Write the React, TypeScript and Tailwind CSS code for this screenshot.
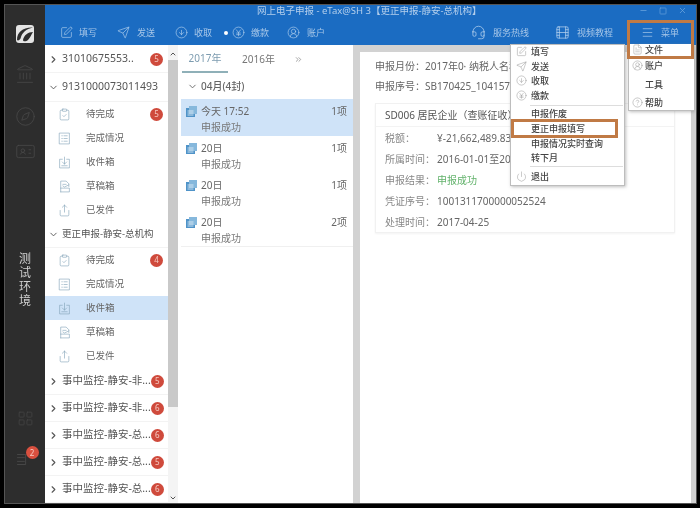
import React from "react";
import { SquarePen, Send, CircleArrowDown, CircleUserRound, Headset, Film, Menu, ChevronRight, ChevronDown, ChevronUp, ClipboardCheck, Share, Landmark, Compass, IdCard, LayoutGrid, Power, CircleHelp, FileText, Minus, Square, X, ChevronsRight } from "lucide-react";

type IconT = React.ComponentType<{ size?: number; strokeWidth?: number; className?: string }>;

const svgProps = (size: number | undefined, strokeWidth: number | undefined, className: string | undefined) => ({
  width: size, height: size, viewBox: "0 0 24 24", fill: "none", stroke: "currentColor", strokeWidth, className,
  strokeLinecap: "round" as const, strokeLinejoin: "round" as const,
});

const ListBox: IconT = ({ size, strokeWidth, className }) => (
  <svg {...svgProps(size, strokeWidth, className)}>
    <rect x="3" y="2" width="18" height="20" />
    <path d="M7 7h1M7 12h1M7 17h1M11 7h6M11 12h6M11 17h6" />
  </svg>
);
const Inbox: IconT = ({ size, strokeWidth, className }) => (
  <svg {...svgProps(size, strokeWidth, className)}>
    <path d="M8 6H3v16h18V6h-5" />
    <path d="M12 2v13M8 11l4 4 4-4M7 18h10" />
  </svg>
);
const Draft: IconT = ({ size, strokeWidth, className }) => (
  <svg {...svgProps(size, strokeWidth, className)}>
    <path d="M5 22V2h10l5 5v5M5 22h16v-7H5" />
    <path d="M9 8h6M9 11l3 2 8-4" />
  </svg>
);
const YenCircle: IconT = ({ size, strokeWidth, className }) => (
  <svg {...svgProps(size, strokeWidth, className)}>
    <circle cx="12" cy="12" r="10" />
    <path d="M8 7l4 5 4-5M12 12v6M8.5 13h7M8.5 16h7" />
  </svg>
);
const Lines: IconT = ({ size, strokeWidth, className }) => (
  <svg {...svgProps(size, strokeWidth, className)}>
    <path d="M4 4h13v16H4M4 9h11M4 15h11" />
  </svg>
);

const Badge = ({ n, className = "" }: { n: number; className?: string }) => (
  <span className={`flex h-[13px] w-[13px] shrink-0 items-center justify-center rounded-full bg-[#cf4a3c] text-[8px] leading-none text-[#f6c9c0] ${className}`}>{n}</span>
);

const GroupRow = ({ open, text, n, h = "h-[27px]", size = "text-[10.5px]" }: { open?: boolean; text: string; n?: number; h?: string; size?: string }) => (
  <div className={`flex ${h} items-center border-b border-[#f3f3f3] pl-[3px] pr-[5px] ${size} text-[#555]`}>
    {open ? <ChevronDown size={11} className="shrink-0 text-[#555]" /> : <ChevronRight size={11} strokeWidth={2.4} className="shrink-0 text-[#555]" />}
    <span className="ml-[3px] whitespace-nowrap">{text}</span>
    {n !== undefined && <Badge n={n} className="ml-auto" />}
  </div>
);

const SubRow = ({ icon: I, text, n, active }: { icon: IconT; text: string; n?: number; active?: boolean }) => (
  <div className={`flex h-[24px] items-center pl-[13px] pr-[5px] text-[9.5px] text-[#666] ${active ? "bg-[#cfe3f8]" : ""}`}>
    <I size={13} strokeWidth={1.1} className="shrink-0 text-[#7d9fb5]" />
    <span className="ml-[15px]">{text}</span>
    {n !== undefined && <Badge n={n} className="ml-auto" />}
  </div>
);

const NavItem = ({ icon: I, text, size = 13, className = "" }: { icon: IconT; text: string; size?: number; className?: string }) => (
  <div className={`flex items-center text-[9px] text-[#a6c6e8] ${className}`}>
    <I size={size} strokeWidth={1.2} className="text-[#b4d0ee]" />
    <span>{text}</span>
  </div>
);

const DayRow = ({ day, count, active, last }: { day: string; count: string; active?: boolean; last?: boolean }) => (
  <div className={`h-[37px] pl-[5px] pr-[6px] pt-[5px] text-[10px] ${active ? "bg-[#cfe3f8]" : ""} ${last ? "border-b border-[#f0f0f0]" : ""}`}>
    <div className="flex h-[14px] items-center text-[#666]">
      <svg viewBox="0 0 11 11" className="h-[11px] w-[11px]">
        <rect x="0" y="2" width="9" height="9" fill="#4f93c8" />
        <rect x="3" y="0" width="8" height="8" fill="#86b8dc" />
        <path d="M1.5 5h6M1.5 7h6M1.5 9h6" stroke="#e8f2fa" strokeWidth="0.8" />
      </svg>
      <span className="ml-[4px]">{day}</span>
      <span className="ml-auto">{count}</span>
    </div>
    <div className="ml-[15px] mt-[2px] text-[#777]">申报成功</div>
  </div>
);

const Field = ({ label, children }: { label: string; children: React.ReactNode }) => (
  <div className="flex h-[21px] items-center text-[#666]">
    <span className="w-[52px] text-[#888]">{label}</span>
    {children}
  </div>
);

const MenuItem = ({ icon: I, text, className = "", indent = "w-[20px]" }: { icon?: IconT; text: string; className?: string; indent?: string }) => (
  <div className={`flex items-center text-[9px] font-medium leading-none text-[#444] ${className}`}>
    <span className={`flex ${indent} justify-center`}>{I && <I size={11} strokeWidth={1.1} className="text-[#999]" />}</span>
    <span className="whitespace-nowrap">{text}</span>
  </div>
);

export default function App() {
  return (
    <div className="relative h-[508px] w-[700px] overflow-hidden bg-black pb-[5px] pl-[5px] pr-[4px] pt-[5px] font-['Noto_Sans','Noto_Sans_CJK_SC',sans-serif] blur-[0.5px]">
      <div className="flex h-full shadow-[0_0_0_1px_#555]">
        <aside className="flex w-[40px] shrink-0 flex-col items-center bg-[#2d2d2d]">
          <div className="mt-[20px] flex h-[18px] w-[18px] items-center justify-center rounded-[3px] bg-[#e4e4e4]">
            <svg viewBox="0 0 18 18" className="h-[18px] w-[18px]">
              <path d="M1 15C1 7 7 2 17 2.5C10 4 6 8 5 12C4.5 15 2 16 1 15Z" fill="#2d2d2d" />
              <path d="M7 15C8 10 12 7 17 7C15 10 14 13 12 15C10.5 16.5 7 17 7 15Z" fill="#2d2d2d" />
            </svg>
          </div>
          <Landmark size={20} strokeWidth={1} className="mt-[21px] text-[#474747]" />
          <Compass size={21} strokeWidth={1} className="mt-[22px] text-[#474747]" />
          <IdCard size={21} strokeWidth={1} className="mt-[14px] text-[#474747]" />
          <div className="mt-[90px] w-[12px] text-[12px] leading-[14px] text-[#cfcfcf]">测试环境</div>
          <LayoutGrid size={17} strokeWidth={1} className="mt-[102px] text-[#474747]" />
          <div className="relative mt-[25px]">
            <Lines size={15} strokeWidth={1} className="-ml-[6px] text-[#555]" />
            <Badge n={2} className="absolute -right-[9px] -top-[6px] bg-[#d9503f]" />
          </div>
        </aside>

        <div className="flex min-w-0 flex-1 flex-col">
          <header className="h-[40px] shrink-0 bg-[#1b6cc2]">
            <div className="relative h-[15px]">
              <span className="absolute left-[212px] top-0 whitespace-nowrap text-[9.5px] leading-[11px] text-[#b4cfec]">网上电子申报 - eTax@SH 3【更正申报-静安-总机构】</span>
              <div className="absolute right-[9px] top-[1px] flex items-center gap-[11px] text-[#6ba4dd]">
                <Minus size={9} /><Square size={8} /><X size={9} />
              </div>
            </div>
            <div className="flex h-[25px] items-center pl-[15px] pr-[17px]">
              <NavItem icon={SquarePen} text="填写" className="gap-[6px]" />
              <NavItem icon={Send} text="发送" className="ml-[20px] gap-[7px]" />
              <NavItem icon={CircleArrowDown} text="收取" className="ml-[20px] gap-[6px]" />
              <span className="ml-[12px] h-[4px] w-[4px] rounded-full bg-white" />
              <NavItem icon={YenCircle} text="缴款" className="ml-[4px] gap-[6px]" />
              <NavItem icon={CircleUserRound} text="账户" className="ml-[18px] gap-[7px]" />
              <NavItem icon={Headset} size={15} text="服务热线" className="ml-auto gap-[7px]" />
              <NavItem icon={Film} size={15} text="视频教程" className="ml-[26px] gap-[7px]" />
              <NavItem icon={Menu} text="菜单" className="ml-[28px] gap-[7px]" />
            </div>
          </header>

          <div className="flex min-h-0 flex-1 bg-white">
            <nav className="w-[123px] shrink-0 overflow-hidden pt-[1px]">
              <GroupRow text="31010675553.." n={5} />
              <GroupRow open text="9131000073011493" h="h-[29px]" />
              <SubRow icon={ClipboardCheck} text="待完成" n={5} />
              <SubRow icon={ListBox} text="完成情况" />
              <SubRow icon={Inbox} text="收件箱" />
              <SubRow icon={Draft} text="草稿箱" />
              <SubRow icon={Share} text="已发件" />
              <GroupRow open text="更正申报-静安-总机构" h="h-[26px]" size="text-[9.5px]" />
              <SubRow icon={ClipboardCheck} text="待完成" n={4} />
              <SubRow icon={ListBox} text="完成情况" />
              <SubRow icon={Inbox} text="收件箱" active />
              <SubRow icon={Draft} text="草稿箱" />
              <SubRow icon={Share} text="已发件" />
              <GroupRow text="事中监控-静安-非..." n={5} />
              <GroupRow text="事中监控-静安-非..." n={6} />
              <GroupRow text="事中监控-静安-总..." n={6} />
              <GroupRow text="事中监控-静安-总..." n={5} />
              <GroupRow text="事中监控-静安-总..." n={6} />
            </nav>

            <div className="flex w-[10px] shrink-0 flex-col items-center bg-[#f4f4f4]">
              <ChevronUp size={8} strokeWidth={3} className="mt-[5px] text-[#555]" />
              <div className="mt-[2px] h-[347px] w-full bg-[#c9c9c9]" />
              <ChevronDown size={8} strokeWidth={3} className="mb-[1px] mt-auto text-[#555]" />
            </div>

            <section className="ml-[3px] w-[172px] shrink-0">
              <div className="flex h-[28px] items-end text-[10px]">
                <div className="ml-[1px] flex h-[28px] w-[46px] items-center justify-center border-b-2 border-[#8fb0b8] text-[#7d9cb0]">2017年</div>
                <div className="ml-[14px] flex h-[28px] items-center text-[#777]">2016年</div>
                <ChevronsRight size={9} className="mb-[9px] ml-[19px] text-[#888]" />
              </div>
              <div className="flex h-[26px] items-center pl-[6px] text-[10px] font-medium text-[#666]">
                <ChevronDown size={11} />
                <span className="ml-[3px]">04月(4封)</span>
              </div>
              <DayRow day="今天 17:52" count="1项" active />
              <DayRow day="20日" count="1项" />
              <DayRow day="20日" count="1项" />
              <DayRow day="20日" count="2项" last />
            </section>

            <main className="flex min-w-0 flex-1 bg-[#d2d2d2] pl-[7px] pr-[5px] pt-[7px]">
              <div className="flex-1 bg-white pl-[15px] pt-[6px] text-[10px] text-[#666]">
                <div className="h-[19px] whitespace-nowrap leading-[17px]">申报月份：2017年0· 纳税人名称</div>
                <div className="h-[19px] whitespace-nowrap leading-[19px]">申报序号：SB170425_10415707</div>
                <div className="mt-[7px] h-[130px] w-[300px] border border-[#f1f1f1] shadow-[0_1px_2px_#f3f3f3]">
                  <div className="flex h-[23px] items-center border-b border-[#f3f3f3] pl-[9px] text-[#555]">SD006 居民企业（查账征收）</div>
                  <div className="flex flex-col pl-[9px] pt-[1px]">
                    <Field label="税额："><span>¥-21,662,489.83</span></Field>
                    <Field label="所属时间："><span>2016-01-01至2017</span></Field>
                    <Field label="申报结果："><span className="text-[#62b26b]">申报成功</span></Field>
                    <Field label="凭证序号："><span>1001311700000052524</span></Field>
                    <Field label="处理时间："><span>2017-04-25</span></Field>
                  </div>
                </div>
              </div>
            </main>
          </div>
        </div>
      </div>

      <div className="absolute left-[510px] top-[44px] flex h-[142px] w-[115px] flex-col border border-[#bdbdbd] bg-white shadow-[1px_1px_3px_#8888]">
        <MenuItem icon={SquarePen} text="填写" className="h-[14px]" />
        <MenuItem icon={Send} text="发送" className="h-[15px]" />
        <MenuItem icon={CircleArrowDown} text="收取" className="h-[15px]" />
        <MenuItem icon={YenCircle} text="缴款" className="h-[15px]" />
        <div className="ml-[19px] mr-[1px] mt-[2px] h-px bg-[#ddd]" />
        <MenuItem text="申报作废" className="h-[15px]" />
        <MenuItem text="更正申报填写" className="h-[15px]" />
        <MenuItem text="申报情况实时查询" className="h-[15px]" />
        <MenuItem text="转下月" className="h-[15px]" />
        <div className="ml-[19px] mr-[1px] mt-[1px] h-px bg-[#ddd]" />
        <MenuItem icon={Power} text="退出" className="mt-[1px] h-[17px]" />
      </div>
      <div className="absolute left-[511px] top-[119px] h-[19px] w-[107px] border-[3px] border-[#c07a45]" />

      <div className="absolute left-[628px] top-[44px] flex h-[67px] w-[66px] flex-col border-b border-l border-[#bdbdbd] bg-white shadow-[1px_1px_3px_#8888]">
        <MenuItem icon={FileText} text="文件" indent="w-[16px]" className="h-[12px]" />
        <MenuItem icon={CircleUserRound} text="账户" indent="w-[16px]" className="mt-[2px] h-[15px]" />
        <MenuItem text="工具" indent="w-[16px]" className="mt-[4px] h-[16px]" />
        <MenuItem icon={CircleHelp} text="帮助" indent="w-[16px]" className="mt-[3px] h-[15px]" />
      </div>
      <div className="absolute left-[627px] top-[20px] h-[39px] w-[67px] border-[3px] border-[#c07a45]" />
    </div>
  );
}
